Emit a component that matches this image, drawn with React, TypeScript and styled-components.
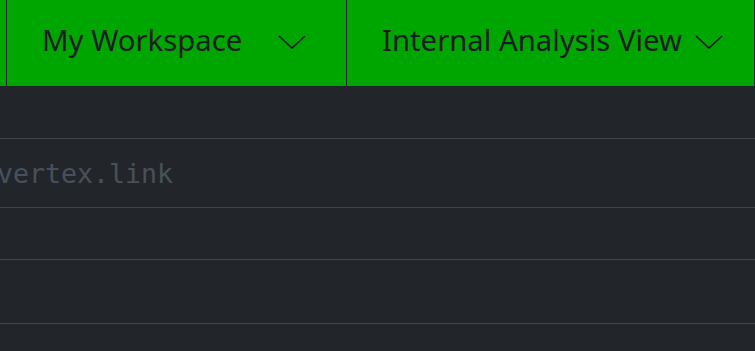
import styled, { createGlobalStyle } from "styled-components";

const Global = createGlobalStyle`
  html, body {
    margin: 0;
    padding: 0;
    background: #22262b;
    overflow: hidden;
  }
`;

const Page = styled.div`
  width: 755px;
  height: 351px;
  overflow: hidden;
  background: #22262b;
`;

const Header = styled.div`
  display: flex;
  height: 86px;
  background: #00a600;
  overflow: hidden;
`;

const Cell = styled.div<{ $width?: number }>`
  display: flex;
  align-items: center;
  flex: ${(p) => (p.$width ? `0 0 ${p.$width}px` : "1 0 auto")};
  box-sizing: border-box;
  border-right: 1px solid #2c2340;
  padding: 0 0 6px 35px;
  white-space: nowrap;
`;

const Stub = styled.div`
  flex: 0 0 7px;
  box-sizing: border-box;
  border-right: 1px solid #2c2340;
`;

const Label = styled.span<{ $grow?: boolean }>`
  flex: ${(p) => (p.$grow ? "1" : "0 0 auto")};
  font-family: "Noto Sans", sans-serif;
  font-size: 29.3px;
  color: #1b1d26;
`;

const Chevron = styled.svg<{ $right?: number }>`
  flex: 0 0 auto;
  width: 30px;
  height: 16px;
  margin-left: 12px;
  margin-right: ${(p) => p.$right ?? 0}px;
  margin-top: 4px;
`;

const Row = styled.div<{ $h: number }>`
  display: flex;
  align-items: center;
  height: ${(p) => p.$h}px;
  box-sizing: border-box;
  border-bottom: 1px solid #40454b;
`;

const Mono = styled.span`
  font-family: "DejaVu Sans Mono", monospace;
  font-size: 26.6px;
  color: #485159;
  margin-left: -3px;
  margin-top: 1px;
`;

const Caret = ({ right }: { right?: number }) => (
  <Chevron $right={right} viewBox="0 0 30 16">
    <path d="M2 2 L15 14 L28 2" fill="none" stroke="#1b1d26" strokeWidth="1.7" />
  </Chevron>
);

export default function App() {
  return (
    <Page>
      <Global />
      <Header>
        <Stub />
        <Cell $width={340}>
          <Label $grow>My Workspace</Label>
          <Caret right={39} />
        </Cell>
        <Cell>
          <Label>Internal Analysis View</Label>
          <Caret />
        </Cell>
      </Header>
      <Row $h={53} />
      <Row $h={69}>
        <Mono>vertex.link</Mono>
      </Row>
      <Row $h={52} />
      <Row $h={64} />
    </Page>
  );
}
